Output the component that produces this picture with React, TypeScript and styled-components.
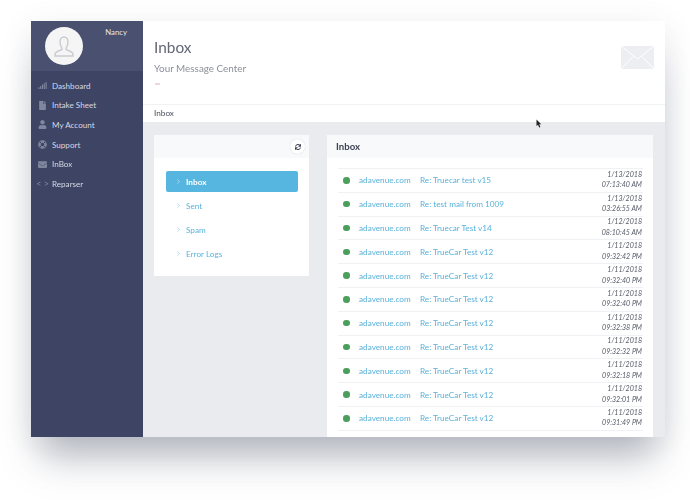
import styled, { createGlobalStyle } from 'styled-components'
import { FaEnvelope, FaFile, FaLifeRing, FaSignal, FaSync, FaUser } from 'react-icons/fa'
import { ChevronRight } from 'lucide-react'

const GlobalStyle = createGlobalStyle`
	html, body {
		margin: 0;
		height: 500px;
		overflow: hidden;
		background: #fff;
		font-family: Lato, "Open Sans", "Liberation Sans", sans-serif;
	}
`

const Page = styled.div`
	position: relative;
	width: 690px;
	height: 500px;
	padding: 21px 25px 0 31px;
	box-sizing: border-box;
	overflow: hidden;
`

const Window = styled.div`
	display: flex;
	width: 634px;
	height: 416px;
	overflow: hidden;
	background: #fff;
	box-shadow: 0 30px 36px -10px rgba(70, 80, 100, 0.38), 0 6px 30px rgba(70, 80, 100, 0.1);
	filter: blur(0.3px);
`

const Sidebar = styled.aside`
	width: 112px;
	flex: none;
	background: #3d4464;
`

const Profile = styled.div`
	display: flex;
	justify-content: space-between;
	height: 50px;
	padding: 6px 16px 0 14px;
	box-sizing: border-box;
	background: #4a506f;
`

const Avatar = styled.div`
	width: 38px;
	height: 38px;
	display: flex;
	align-items: center;
	justify-content: center;
	border-radius: 50%;
	background: #f5f5f6;
	color: #c9cbd0;
`

const UserName = styled.span`
	margin-top: 0;
	color: #e3e5ec;
	font-size: 7.8px;
	line-height: 11px;
`

const NavList = styled.nav`
	display: flex;
	flex-direction: column;
	padding-top: 5px;
`

const NavRow = styled.div`
	display: flex;
	align-items: center;
	height: 19.6px;
	padding-left: 6px;
	color: #d6d9e4;
	font-size: 8.1px;
`

const NavIcon = styled.span`
	display: flex;
	align-items: center;
	justify-content: center;
	width: 11px;
	margin-right: 4px;
	color: #7f869e;
	font-size: 9px;
	white-space: nowrap;
`

const Main = styled.main`
	flex: 1;
	min-width: 0;
	display: flex;
	flex-direction: column;
`

const Header = styled.header`
	display: flex;
	justify-content: space-between;
	height: 84px;
	padding: 16px 11px 0 11px;
	box-sizing: border-box;
	border-bottom: 1px solid #f1f2f4;
`

const HeaderText = styled.div`
	display: flex;
	flex-direction: column;
`

const PageTitle = styled.h1`
	margin: 0;
	color: #636875;
	font-size: 15.4px;
	font-weight: 400;
	line-height: 20px;
`

const Subtitle = styled.p`
	margin: 4px 0 0;
	color: #8c909b;
	font-size: 9.9px;
	line-height: 14px;
`

const Dash = styled.span`
	width: 5px;
	height: 2px;
	margin-top: 8px;
	margin-left: 1px;
	background: #f0d5da;
`

const MailIcon = styled.svg`
	width: 33px;
	height: 23px;
	margin-top: 9px;
`

const Breadcrumb = styled.div`
	height: 17px;
	padding-left: 11px;
	color: #4b505c;
	font-size: 8.2px;
	line-height: 17px;
`

const Content = styled.div`
	flex: 1;
	min-height: 0;
	display: flex;
	align-items: flex-start;
	gap: 18px;
	padding: 13px 12px 0 11px;
	background: #e9ebef;
`

const Card = styled.section<{ $width: number; $height: number }>`
	flex: none;
	width: ${p => p.$width}px;
	height: ${p => p.$height}px;
	overflow: hidden;
	background: #fff;
`

const CardHead = styled.div`
	display: flex;
	align-items: center;
	justify-content: space-between;
	height: 23px;
	padding: 0 4px 0 9px;
	background: #f8f9fb;
	color: #3d4252;
	font-size: 9.6px;
	font-weight: 700;
`

const RefreshButton = styled.button`
	width: 15px;
	height: 15px;
	display: flex;
	align-items: center;
	justify-content: center;
	padding: 0;
	border: none;
	border-radius: 50%;
	background: #fff;
	box-shadow: 0 0 1px rgba(80, 90, 110, 0.35);
	color: #3d4252;
	font-size: 6px;
`

const FolderList = styled.div`
	display: flex;
	flex-direction: column;
	gap: 3px;
	padding: 13px 11px 0 12px;
`

const Folder = styled.div<{ $active?: boolean }>`
	display: flex;
	align-items: center;
	gap: 4px;
	height: 21px;
	padding-left: 9px;
	border-radius: 2px;
	background: ${p => (p.$active ? '#56b6df' : 'transparent')};
	color: ${p => (p.$active ? '#fff' : '#5ab4dc')};
	font-size: 8.2px;
	font-weight: ${p => (p.$active ? 700 : 400)};
`

const MessageList = styled.div`
	margin: 10px 10px 0 11px;
`

const MessageRow = styled.div`
	display: flex;
	align-items: center;
	height: 22.8px;
	border-top: 1px solid #f0f1f4;
	color: #5ab2da;
	font-size: 8.2px;
`

const StatusDot = styled.span`
	width: 6.5px;
	height: 6.5px;
	margin-left: 5px;
	flex: none;
	border-radius: 50%;
	background: #4a9f5d;
`

const Domain = styled.span`
	width: 61px;
	margin-left: 9.5px;
	flex: none;
`

const Subject = styled.span`
	flex: 1;
`

const Stamp = styled.div`
	padding-right: 1px;
	color: #555a66;
	font-size: 7.1px;
	font-style: italic;
	line-height: 10.5px;
	text-align: right;
`

const Cursor = styled.svg`
	position: absolute;
	left: 536px;
	top: 119px;
	width: 6px;
	height: 9px;
`

const navItems = [
	{ icon: <FaSignal />, label: 'Dashboard' },
	{ icon: <FaFile />, label: 'Intake Sheet' },
	{ icon: <FaUser />, label: 'My Account' },
	{ icon: <FaLifeRing />, label: 'Support' },
	{ icon: <FaEnvelope />, label: 'InBox' },
	{ icon: '< >', label: 'Reparser' },
]

const folders = ['Inbox', 'Sent', 'Spam', 'Error Logs']

const messages = [
	['Re: Truecar test v15', '1/13/2018', '07:13:40 AM'],
	['Re: test mail from 1009', '1/13/2018', '03:26:55 AM'],
	['Re: Truecar Test v14', '1/12/2018', '08:10:45 AM'],
	['Re: TrueCar Test v12', '1/11/2018', '09:32:42 PM'],
	['Re: TrueCar Test v12', '1/11/2018', '09:32:40 PM'],
	['Re: TrueCar Test v12', '1/11/2018', '09:32:40 PM'],
	['Re: TrueCar Test v12', '1/11/2018', '09:32:38 PM'],
	['Re: TrueCar Test v12', '1/11/2018', '09:32:32 PM'],
	['Re: TrueCar Test v12', '1/11/2018', '09:32:18 PM'],
	['Re: TrueCar Test v12', '1/11/2018', '09:32:01 PM'],
	['Re: TrueCar Test v12', '1/11/2018', '09:31:49 PM'],
]

const App = () => {
	return (
		<Page>
			<GlobalStyle />
			<Window>
				<Sidebar>
					<Profile>
						<Avatar>
							<svg width="24" height="25" viewBox="0 0 24 25" fill="none" stroke="currentColor" strokeWidth="1.4">
								<path d="M8 7.500a4 4.500 0 0 1 8 0c0 3-1.200 5.500-1.800 6.600v1.600c2.600 1 6.800 1.800 6.800 4.600v1.700H3v-1.700c0-2.800 4.200-3.600 6.800-4.600v-1.600C9.200 13 8 10.500 8 7.500z" />
							</svg>
						</Avatar>
						<UserName>Nancy</UserName>
					</Profile>
					<NavList>
						{navItems.map(item => (
							<NavRow key={item.label}>
								<NavIcon>{item.icon}</NavIcon>
								{item.label}
							</NavRow>
						))}
					</NavList>
				</Sidebar>
				<Main>
					<Header>
						<HeaderText>
							<PageTitle>Inbox</PageTitle>
							<Subtitle>Your Message Center</Subtitle>
							<Dash />
						</HeaderText>
						<MailIcon viewBox="0 0 33 23">
							<rect width="33" height="23" fill="#eceef2" />
							<path d="M0 0l16.500 13L33 0M0 23l12-12.500M33 23L21 10.500" fill="none" stroke="#fff" strokeWidth="1" />
						</MailIcon>
					</Header>
					<Breadcrumb>Inbox</Breadcrumb>
					<Content>
						<Card $width={155} $height={141}>
							<CardHead>
								<span />
								<RefreshButton>
									<FaSync />
								</RefreshButton>
							</CardHead>
							<FolderList>
								{folders.map((name, i) => (
									<Folder key={name} $active={i === 0}>
										<ChevronRight size={7} strokeWidth={1.6} />
										{name}
									</Folder>
								))}
							</FolderList>
						</Card>
						<Card $width={326} $height={320}>
							<CardHead>Inbox</CardHead>
							<MessageList>
								{messages.map(([subject, date, time], i) => (
									<MessageRow key={i}>
										<StatusDot />
										<Domain>adavenue.com</Domain>
										<Subject>{subject}</Subject>
										<Stamp>
											{date}
											<br />
											{time}
										</Stamp>
									</MessageRow>
								))}
								<MessageRow>
									<Subject />
									<Stamp>1/11/2018</Stamp>
								</MessageRow>
							</MessageList>
						</Card>
					</Content>
				</Main>
			</Window>
			<Cursor viewBox="0 0 6 9">
				<path d="M0.500 0.500v6.500l1.500-1.300 1.200 2.800 1.200-.5-1.200-2.700h2z" fill="#222" />
			</Cursor>
		</Page>
	)
}

export default App
